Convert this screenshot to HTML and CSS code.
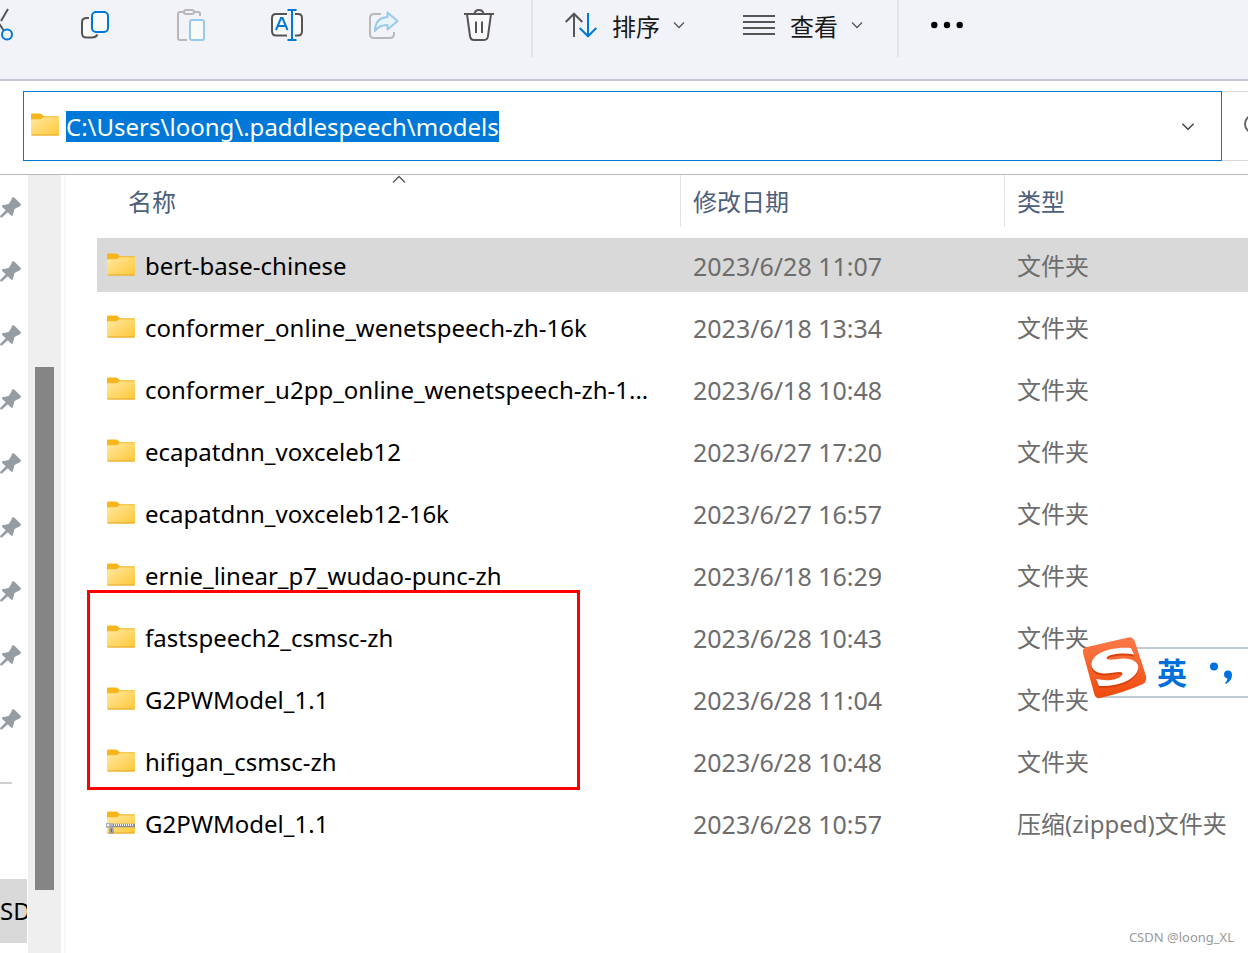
FILE: index.html
```html
<!DOCTYPE html>
<html lang="zh-CN">
<head>
<meta charset="utf-8">
<title>models</title>
<link rel="stylesheet" href="styles.css">
</head>
<body>
<svg class="defs" aria-hidden="true">
  <defs>
    <linearGradient id="face" x1="0" y1="0" x2="1" y2="1"><stop offset="0" stop-color="#ffe9a2"/><stop offset="1" stop-color="#ffc736"/></linearGradient>
    <linearGradient id="flame" x1="0" y1="0" x2="0" y2="1"><stop offset="0" stop-color="#fb7a49"/><stop offset="1" stop-color="#f04a0c"/></linearGradient>
    <symbol id="folder" viewBox="0 0 28 23">
      <path d="M0 1.500Q0 .5 1 .5H9Q10 .5 11 1.500L13 3.200H27Q28 3.200 28 4.200V10H0Z" fill="#f8b51c"/>
      <path d="M0 7.200Q0 6.200 1 6.200H9Q10.500 6.200 11.500 5L12.300 4.300H28V21.500Q28 22.500 27 22.500H1Q0 22.500 0 21.500Z" fill="url(#face)"/>
      <path d="M.5 22H27.500" stroke="#e5a72a"/>
    </symbol>
    <symbol id="pin" viewBox="0 0 21 21">
      <path d="M12.500 .3Q13.500 0 14.500 .8L20.500 6.800Q21.500 8 20.200 9L15 11.700Q14 12.500 14 14L12.800 18.500Q12 19.300 11 18.500L7.800 15.300L2 20.500Q.5 20.900 .2 20L.5 18.500L5.800 13.300L2.200 10Q1.500 8.800 2.500 8.200L7.500 7.200Q9 7 9.800 5.500Z" fill="#959da3"/>
    </symbol>
    <symbol id="chevron" viewBox="0 0 12 8"><path d="M1 1.500L6 6.500L11 1.500" fill="none" stroke="currentColor" stroke-width="1.300"/></symbol>
  </defs>
</svg>

<header class="toolbar">
  <button class="tool cut" aria-label="剪切"><svg width="34" height="34" viewBox="0 0 34 34" fill="none" stroke="#555" stroke-width="2"><path d="M7 1L21.500 22M26 1L19 13"/><circle cx="25" cy="26.500" r="5" stroke="#0078d7"/><circle cx="8" cy="26.500" r="5" stroke="#0078d7"/></svg></button>
  <button class="tool" aria-label="复制"><svg width="34" height="34" viewBox="0 0 34 34" fill="none" stroke-width="2"><path d="M12 9H8Q4 9 4 13V25Q4 29.500 8 29.500H14Q18 29.500 19 26.500H12Z" fill="#fafafa"/><path d="M11 10H9Q4 10 4 14V25Q4 29.500 8.500 29.500H14Q18 29.500 19.500 26.500" stroke="#555"/><rect x="14" y="4" width="16" height="20" rx="4" fill="#fafafa" stroke="#0078d7"/></svg></button>
  <button class="tool" aria-label="粘贴"><svg width="34" height="34" viewBox="0 0 34 34" fill="none" stroke="#b8b8b8" stroke-width="2"><path d="M10 4H6Q4 4 4 6V30Q4 32 6 32H13M20 4H24Q26 4 26 6V8"/><rect x="10" y="2" width="10" height="4" rx="2"/><rect x="16" y="12" width="14" height="20" rx="2" fill="#fafafa" stroke="#99c9ee"/></svg></button>
  <button class="tool" aria-label="重命名"><svg width="34" height="34" viewBox="0 0 34 34" fill="none" stroke="#555" stroke-width="2"><path d="M17 6H6Q2 6 2 10V23Q2 27.500 6 27.500H17M25 6H28Q32 6 32 10V23Q32 27.500 28 27.500H25" fill="#fafafa"/><path d="M6 22L11 10H12.500L17.500 22M8 18H15.500M22 2V32M17.500 2H26.500M17.500 32H26.500" stroke="#0078d7"/></svg></button>
  <button class="tool" aria-label="共享"><svg width="34" height="34" viewBox="0 0 34 34" fill="none" stroke="#b8b8b8" stroke-width="2" stroke-linejoin="round"><path d="M15 6H8Q4 6 4 10V26Q4 30 8 30H24Q28 30 28 26V24"/><path d="M21.500 4.500L31.500 13L21.500 21.500V17Q13 17 9 23Q9 10 21.500 9Z" fill="#e9f3fa" stroke="#99c9ee"/></svg></button>
  <button class="tool" aria-label="删除"><svg width="34" height="34" viewBox="0 0 34 34" fill="none" stroke="#555" stroke-width="2"><path d="M5 6L8 28Q8.500 32 12 32H22Q25.500 32 26 28L29 6Z" fill="#fafafa"/><path d="M2 6H32M12.500 6Q13 2 17 2T21.500 6M14 13.500V25M20 13.500V25"/></svg></button>
  <span class="divider"></span>
  <button class="menu-button sort"><svg width="32" height="26" viewBox="0 0 32 26" fill="none" stroke-width="2"><path d="M9 25V2M.7 10L9 1.700L17.300 10" stroke="#555"/><path d="M23 1V24M14.700 16L23 24.300L31.300 16" stroke="#0078d7"/></svg><span>排序</span><svg class="chev" width="12" height="8"><use href="#chevron"/></svg></button>
  <button class="menu-button view"><svg width="32" height="26" viewBox="0 0 32 26" stroke="#555" stroke-width="2"><path d="M0 4H32M0 10H32M0 16H32M0 22H32"/></svg><span>查看</span><svg class="chev" width="12" height="8"><use href="#chevron"/></svg></button>
  <span class="divider"></span>
  <button class="more" aria-label="更多"><svg width="32" height="8" viewBox="0 0 32 8"><circle cx="3.300" cy="4" r="3.200"/><circle cx="16" cy="4" r="3.200"/><circle cx="28.700" cy="4" r="3.200"/></svg></button>
</header>

<div class="address-row">
  <div class="address">
    <svg class="folder" width="28" height="23"><use href="#folder"/></svg>
    <input class="path" aria-label="路径" value="C:\Users\loong\.paddlespeech\models">
    <button class="drop" aria-label="以前的位置"><svg width="14" height="9"><use href="#chevron"/></svg></button>
  </div>
  <button class="search" aria-label="搜索"><svg width="24" height="24" viewBox="0 0 24 24" fill="none" stroke="#666" stroke-width="2"><circle cx="10" cy="10" r="9"/><path d="M17 17L23 23"/></svg></button>
</div>

<main class="content">
  <nav class="sidebar" aria-label="快速访问">
    <ul class="pins">
      <li><svg width="21" height="21"><use href="#pin"/></svg></li>
      <li><svg width="21" height="21"><use href="#pin"/></svg></li>
      <li><svg width="21" height="21"><use href="#pin"/></svg></li>
      <li><svg width="21" height="21"><use href="#pin"/></svg></li>
      <li><svg width="21" height="21"><use href="#pin"/></svg></li>
      <li><svg width="21" height="21"><use href="#pin"/></svg></li>
      <li><svg width="21" height="21"><use href="#pin"/></svg></li>
      <li><svg width="21" height="21"><use href="#pin"/></svg></li>
      <li><svg width="21" height="21"><use href="#pin"/></svg></li>
    </ul>
    <span class="rule"></span>
    <a class="drive" href="#drive">SD</a>
  </nav>
  <div class="scrollbar"><div class="thumb"></div></div>
  <section class="list">
    <table class="files">
      <colgroup><col class="col-name"><col class="col-date"><col></colgroup>
      <thead>
        <tr>
          <th><div class="head name-head">名称<svg class="sorted" width="14" height="9" viewBox="0 0 14 9"><path d="M1 7.500L7 1.500L13 7.500" fill="none" stroke="#555" stroke-width="1.300"/></svg></div></th>
          <th><div class="head">修改日期</div></th>
          <th><div class="head last">类型</div></th>
        </tr>
      </thead>
      <tbody>
        <tr class="selected"><td><div class="name"><svg class="folder" width="28" height="23"><use href="#folder"/></svg>bert-base-chinese</div></td><td class="date">2023/6/28 11:07</td><td>文件夹</td></tr>
        <tr><td><div class="name"><svg class="folder" width="28" height="23"><use href="#folder"/></svg>conformer_online_wenetspeech-zh-16k</div></td><td class="date">2023/6/18 13:34</td><td>文件夹</td></tr>
        <tr><td><div class="name"><svg class="folder" width="28" height="23"><use href="#folder"/></svg>conformer_u2pp_online_wenetspeech-zh-1...</div></td><td class="date">2023/6/18 10:48</td><td>文件夹</td></tr>
        <tr><td><div class="name"><svg class="folder" width="28" height="23"><use href="#folder"/></svg>ecapatdnn_voxceleb12</div></td><td class="date">2023/6/27 17:20</td><td>文件夹</td></tr>
        <tr><td><div class="name"><svg class="folder" width="28" height="23"><use href="#folder"/></svg>ecapatdnn_voxceleb12-16k</div></td><td class="date">2023/6/27 16:57</td><td>文件夹</td></tr>
        <tr><td><div class="name"><svg class="folder" width="28" height="23"><use href="#folder"/></svg>ernie_linear_p7_wudao-punc-zh</div></td><td class="date">2023/6/18 16:29</td><td>文件夹</td></tr>
        <tr><td><div class="name"><svg class="folder" width="28" height="23"><use href="#folder"/></svg>fastspeech2_csmsc-zh</div></td><td class="date">2023/6/28 10:43</td><td>文件夹</td></tr>
        <tr><td><div class="name"><svg class="folder" width="28" height="23"><use href="#folder"/></svg>G2PWModel_1.1</div></td><td class="date">2023/6/28 11:04</td><td>文件夹</td></tr>
        <tr><td><div class="name"><svg class="folder" width="28" height="23"><use href="#folder"/></svg>hifigan_csmsc-zh</div></td><td class="date">2023/6/28 10:48</td><td>文件夹</td></tr>
        <tr><td><div class="name"><svg class="folder" width="28" height="23" viewBox="0 0 28 23"><use href="#folder" width="28" height="23"/><path d="M5 14.500H28" stroke="#8c8c8c" stroke-width="3.500"/><path d="M7 14H27" stroke="#f2f2f2" stroke-width="2" stroke-dasharray="1 1"/><path d="M-1 12H6V17H-1Z" fill="#b5b5b5"/><path d="M2.500 15H6L7 21.500Q7 23 5 23H3.500Q2 23 2 21.500Z" fill="#a0a0a0"/><path d="M4 18H5V21H4Z" fill="#666"/><path d="M0 13H2V15H0Z" fill="#eee"/></svg>G2PWModel_1.1</div></td><td class="date">2023/6/28 10:57</td><td>压缩(zipped)文件夹</td></tr>
      </tbody>
    </table>
    <div class="marker"></div>
  </section>
</main>

<aside class="ime">
  <svg class="ime-logo" width="66" height="62" viewBox="0 0 66 62">
    <path d="M4 10L45 .5Q50 -.5 52 5L63 39Q64 45 60 47Q40 56 17 61Q12 62 11 56L0 16Q-1 11 4 10Z" fill="url(#flame)"/>
    <path id="swash" d="M48 13C36 12 22 14 14 20C7 25 6 34 15 37.500C23 40 30 37 37 37C43 38 37 44 28 45C23 45.500 18 45 13 44L16 51C33 52 49 46 54 37C58 29 52 24 42 23.500C34 23 28 26 24 24C21 20 38 17 51 19.500Z" fill="#d9410c"/>
    <path d="M48 11C36 10 22 12 14 18C7 23 6 32 15 35.500C23 38 30 35 37 35C43 36 37 42 28 43C23 43.500 18 43 13 42L16 49C33 50 49 44 54 35C58 27 52 22 42 21.500C34 21 28 24 24 22C21 18 38 15 51 17.500Z" fill="#fff"/>
  </svg>
  <span class="ime-mode">英</span>
  <svg width="24" height="26" viewBox="0 0 24 26" fill="#0070dc"><circle cx="5" cy="6.500" r="4"/><path d="M19 10.500Q23 10.500 23 15Q23 20.500 17 24L16 23Q18.500 20.500 18.500 18.500Q15 18 15 14.500Q15 10.500 19 10.500Z"/></svg>
</aside>
<div class="watermark">CSDN @loong_XL</div>
</body>
</html>
```

FILE: styles.css
```css
* { box-sizing: border-box; }

html, body { height: 100%; }

body {
  margin: 0;
  display: flex;
  flex-direction: column;
  position: relative;
  overflow: hidden;
  background: #fff;
  color: #000;
  font-family: "Noto Sans", "Noto Sans CJK SC", sans-serif;
  font-size: 24px;
}

button {
  border: 0;
  padding: 0;
  background: none;
  color: #1a1a1a;
  font: inherit;
}

svg { display: block; flex: none; overflow: visible; }

.defs { position: absolute; width: 0; height: 0; }

.toolbar {
  display: flex;
  align-items: flex-start;
  height: 81px;
  flex: none;
  background: #f2f3f8;
  border-bottom: 2px solid #c5c5d3;
}

.tool {
  display: flex;
  justify-content: center;
  flex: none;
  width: 96px;
  padding-top: 8px;
}

.cut { margin-left: -49px; }

.divider {
  flex: none;
  width: 2px;
  height: 57px;
  margin-left: 4px;
  background: #e3e4e9;
}

.menu-button {
  display: flex;
  align-items: center;
  flex: none;
  height: 50px;
  gap: 15px;
  white-space: nowrap;
}

.sort { margin-left: 32px; }
.view { margin: 0 30px 0 58px; }
.chev { color: #555; margin-left: -2px; }

.more { margin-left: 32px; padding-top: 21px; }

.address-row {
  display: flex;
  flex: none;
  height: 94px;
  padding: 10px 0 13px 23px;
  border-bottom: 1px solid #b9b9b9;
}

.address {
  display: flex;
  flex: 1;
  align-items: center;
  padding: 0 26px 0 7px;
  border: 1px solid #0078d7;
}

.folder { margin-bottom: 4px; }

.path {
  field-sizing: content;
  height: 31px;
  margin-left: 7px;
  border: 0;
  padding: 0;
  background: #0078d7;
  color: #fff;
  font: inherit;
  outline: 0;
}

.drop { margin-left: auto; color: #444; }

.search {
  width: 26px;
  overflow: hidden;
  padding-left: 22px;
  border: solid #d9d9d9;
  border-width: 1px 0;
}

.content { display: flex; flex: 1; min-height: 0; }

.sidebar { flex: none; width: 28px; overflow: hidden; }

.pins { margin: 0; padding: 0; list-style: none; }
.pins li { display: flex; align-items: center; height: 64px; }

.rule {
  display: block;
  width: 12px;
  height: 2px;
  margin: 31px 0 95px;
  background: #d0d0d0;
}

.drive {
  display: block;
  width: 27px;
  height: 64px;
  overflow: hidden;
  background: #d9d9d9;
  color: #000;
  line-height: 64px;
  text-decoration: none;
}

.scrollbar {
  flex: none;
  width: 33px;
  padding: 192px 7px 63px;
  background: #efefef;
}

.thumb { height: 100%; background: #858585; }

.list {
  flex: 1;
  min-width: 0;
  position: relative;
  margin-left: 3px;
  padding-left: 31px;
  border-left: 2px solid #f7f7f7;
}

.files {
  width: 100%;
  table-layout: fixed;
  border-collapse: separate;
  border-spacing: 0;
  white-space: nowrap;
}

.col-name { width: 584px; }
.col-date { width: 324px; }

th {
  height: 59px;
  padding: 0;
  vertical-align: top;
  text-align: left;
  font-weight: 400;
  color: #4c607a;
}

.head {
  height: 52px;
  padding-left: 12px;
  border-right: 1px solid #e2e2e2;
  line-height: 54px;
}

.name-head { position: relative; padding-left: 31px; }
.last { border-right: 0; }
.sorted { position: absolute; left: 295px; top: 0; }

td {
  height: 62px;
  padding: 2px 0 0 12px;
  border: solid transparent;
  border-width: 4px 0;
  background-clip: padding-box;
  color: #6d6d6d;
  line-height: 32px;
}

td:first-child { padding-left: 10px; color: #000; }

.date { font-size: 25px; }

.selected td { background-color: #d9d9d9; }

.name { display: flex; align-items: center; gap: 10px; }

.marker {
  position: absolute;
  left: 21px;
  top: 415px;
  width: 493px;
  height: 200px;
  border: 3px solid #f00;
}

.ime {
  position: absolute;
  right: 0;
  top: 647px;
  display: flex;
  align-items: center;
  width: 150px;
  height: 51px;
  border: solid #c0cad5;
  border-width: 2px 0;
  background: #fff;
}

.ime-logo { margin: 0 8px 9px -15px; }

.ime-mode {
  margin-right: 22px;
  color: #0070dc;
  font-size: 30px;
  font-weight: 700;
  line-height: 48px;
}

.watermark {
  position: absolute;
  right: 14px;
  bottom: 7px;
  color: #999;
  font-size: 13px;
  line-height: 18px;
}
```
